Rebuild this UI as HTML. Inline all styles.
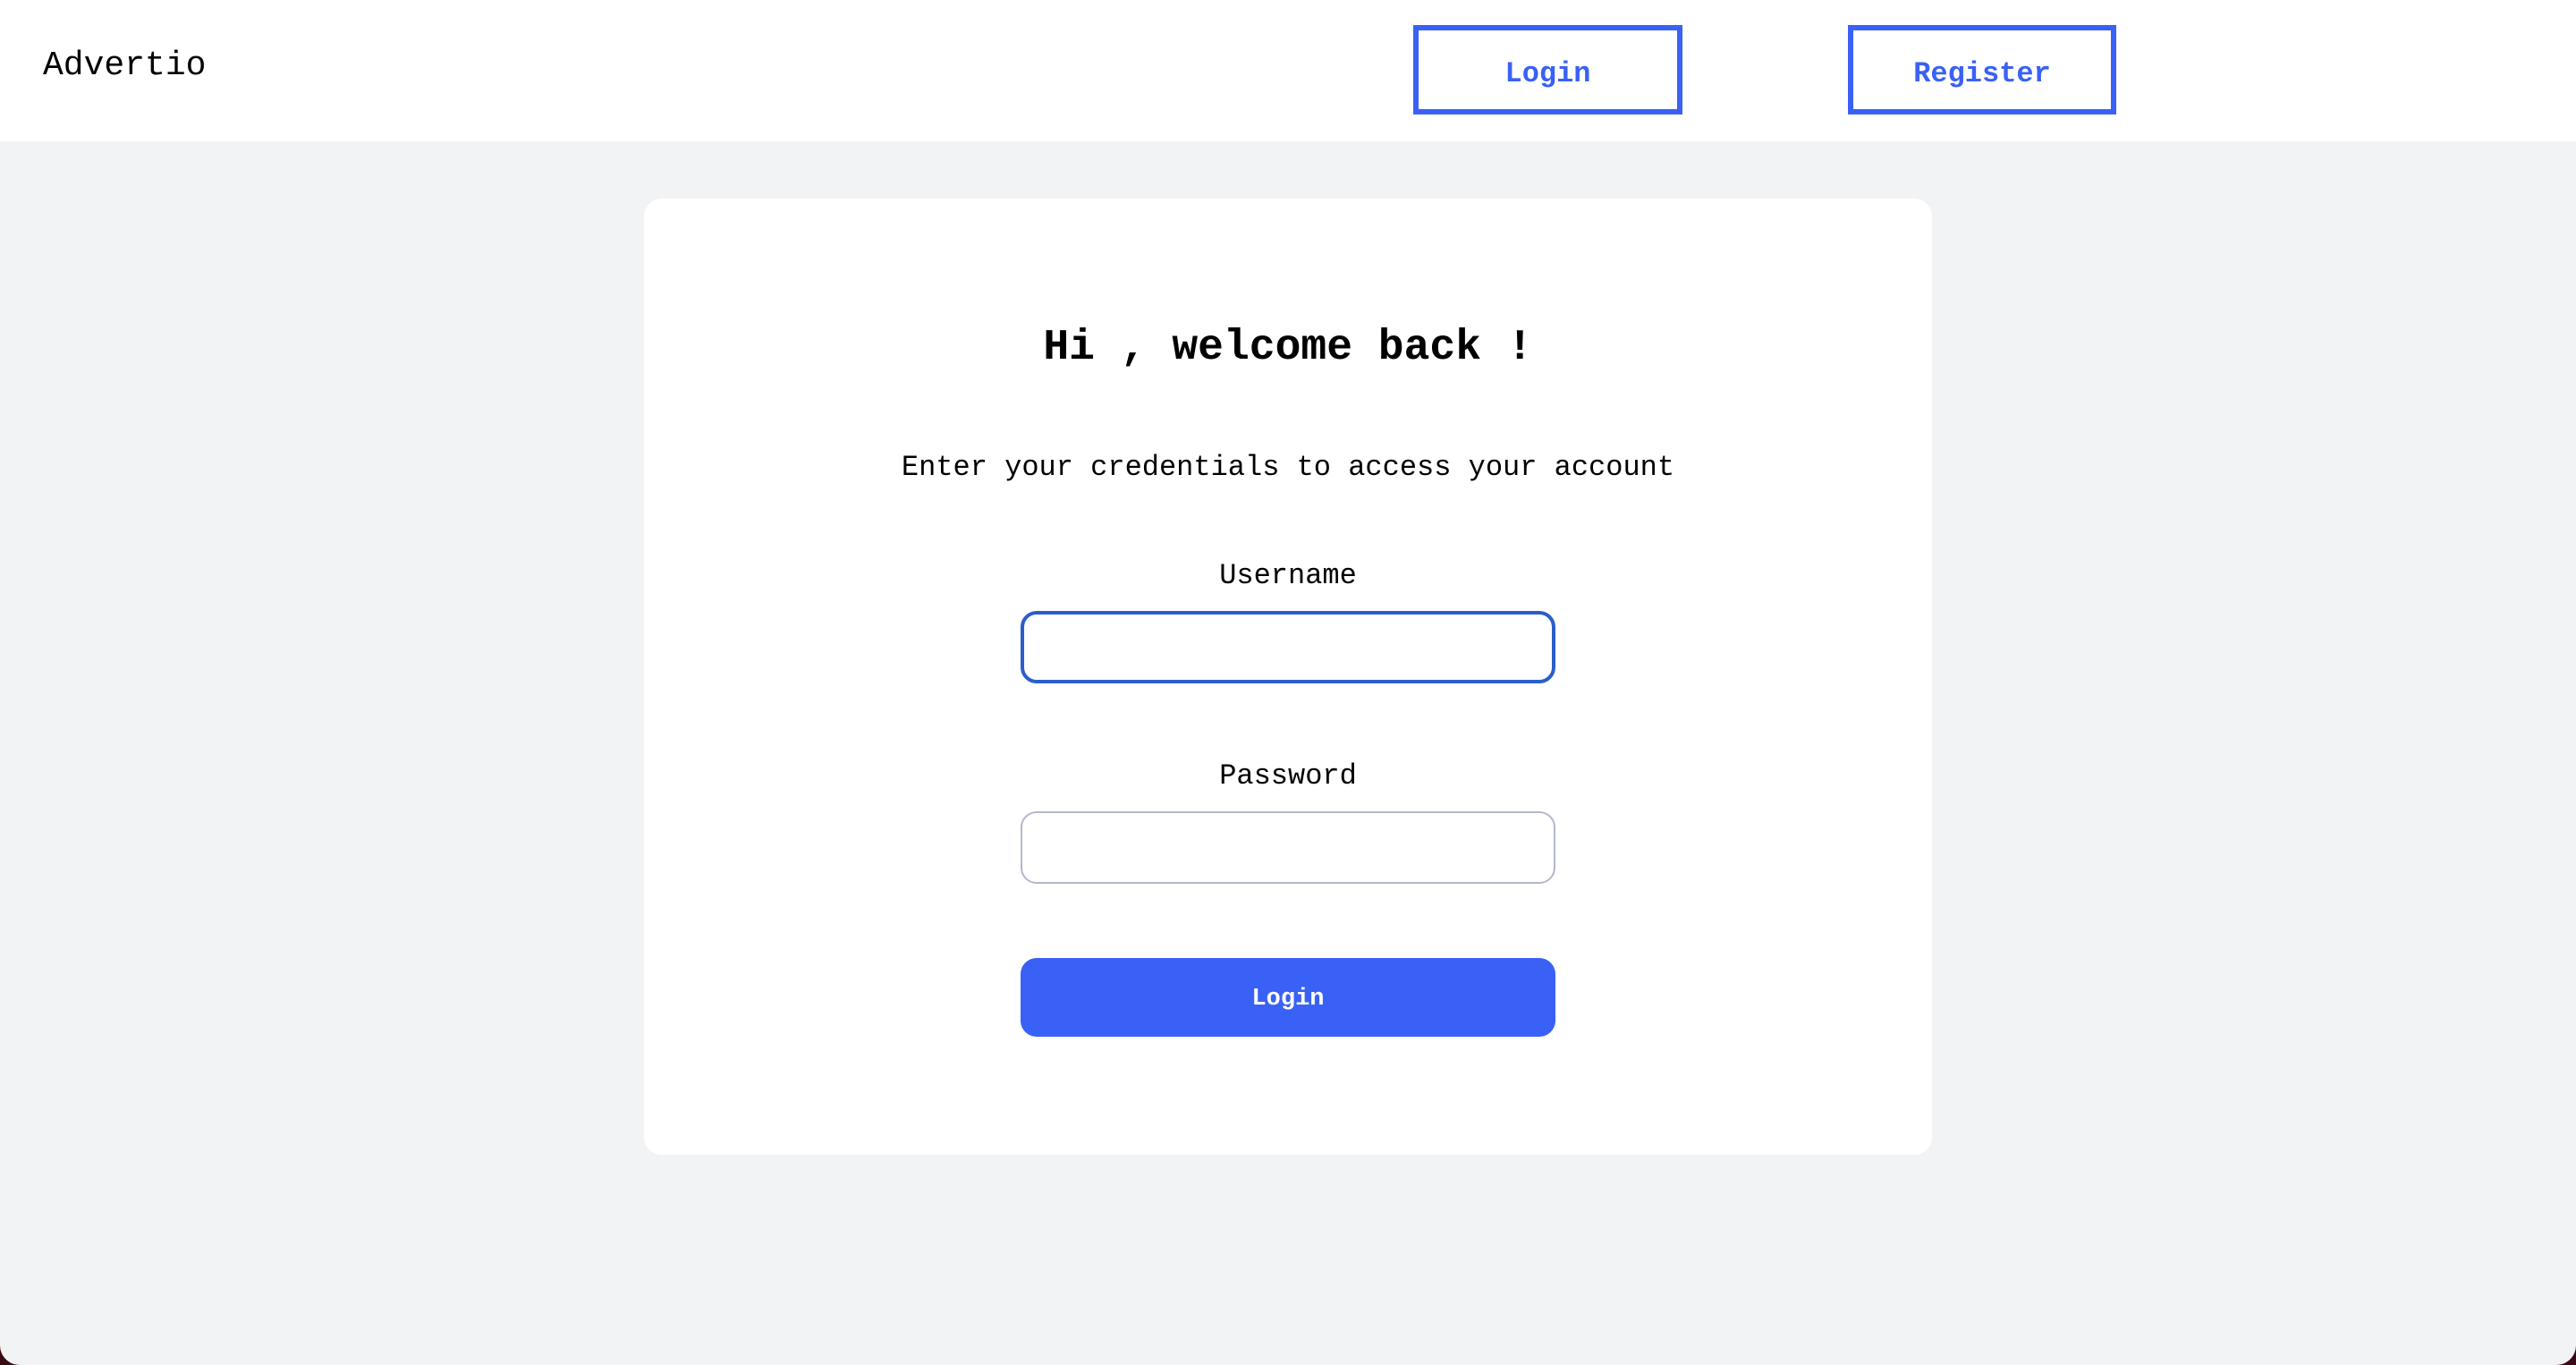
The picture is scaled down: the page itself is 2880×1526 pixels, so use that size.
<!DOCTYPE html>
<html><head><meta charset="utf-8"><style>
html,body{margin:0;padding:0}
body{width:2880px;height:1526px;position:relative;overflow:hidden;background:#3a0a14;font-family:"Liberation Mono",monospace;}
.page{position:absolute;left:0;top:0;width:2880px;height:1526px;background:#f2f3f5;border-radius:0 0 22px 22px;overflow:hidden}
.header{position:absolute;left:0;top:0;width:2880px;height:158px;background:#fff}
.t{position:absolute;white-space:nowrap;line-height:1;color:#000}
.nav{position:absolute;top:28px;height:100px;box-sizing:border-box;border:6px solid #3a61f5;color:#3a61f5;font-weight:bold;font-size:32px;display:flex;align-items:center;justify-content:center;padding-top:8px}
.card{position:absolute;left:720px;top:222px;width:1440px;height:1069px;background:#fff;border-radius:20px}
.c{left:0;width:2880px;text-align:center}
.inp{position:absolute;left:1141px;width:598px;height:81px;box-sizing:border-box;background:#fff;border-radius:18px}
</style></head><body><div class="page">
<div class="header">
<div class="t" style="left:48px;top:55px;font-size:38px">Advertio</div>
<div class="nav" style="left:1580px;width:301px">Login</div>
<div class="nav" style="left:2066px;width:300px">Register</div>
</div>
<div class="card"></div>
<div class="t c" style="top:365px;font-size:48px;font-weight:bold">Hi , welcome back !</div>
<div class="t c" style="top:507px;font-size:32px">Enter your credentials to access your account</div>
<div class="t c" style="top:628px;font-size:32px">Username</div>
<div class="inp" style="top:683px;border:4px solid #2a5ec9"></div>
<div class="t c" style="top:852px;font-size:32px">Password</div>
<div class="inp" style="top:907px;border:2px solid #b3b7cf"></div>
<div style="position:absolute;left:1141px;top:1071px;width:598px;height:88px;background:#3a61f5;border-radius:18px;color:#fff;font-weight:bold;font-size:27px;display:flex;align-items:center;justify-content:center;padding-top:4px;box-sizing:border-box">Login</div>
</div></body></html>
